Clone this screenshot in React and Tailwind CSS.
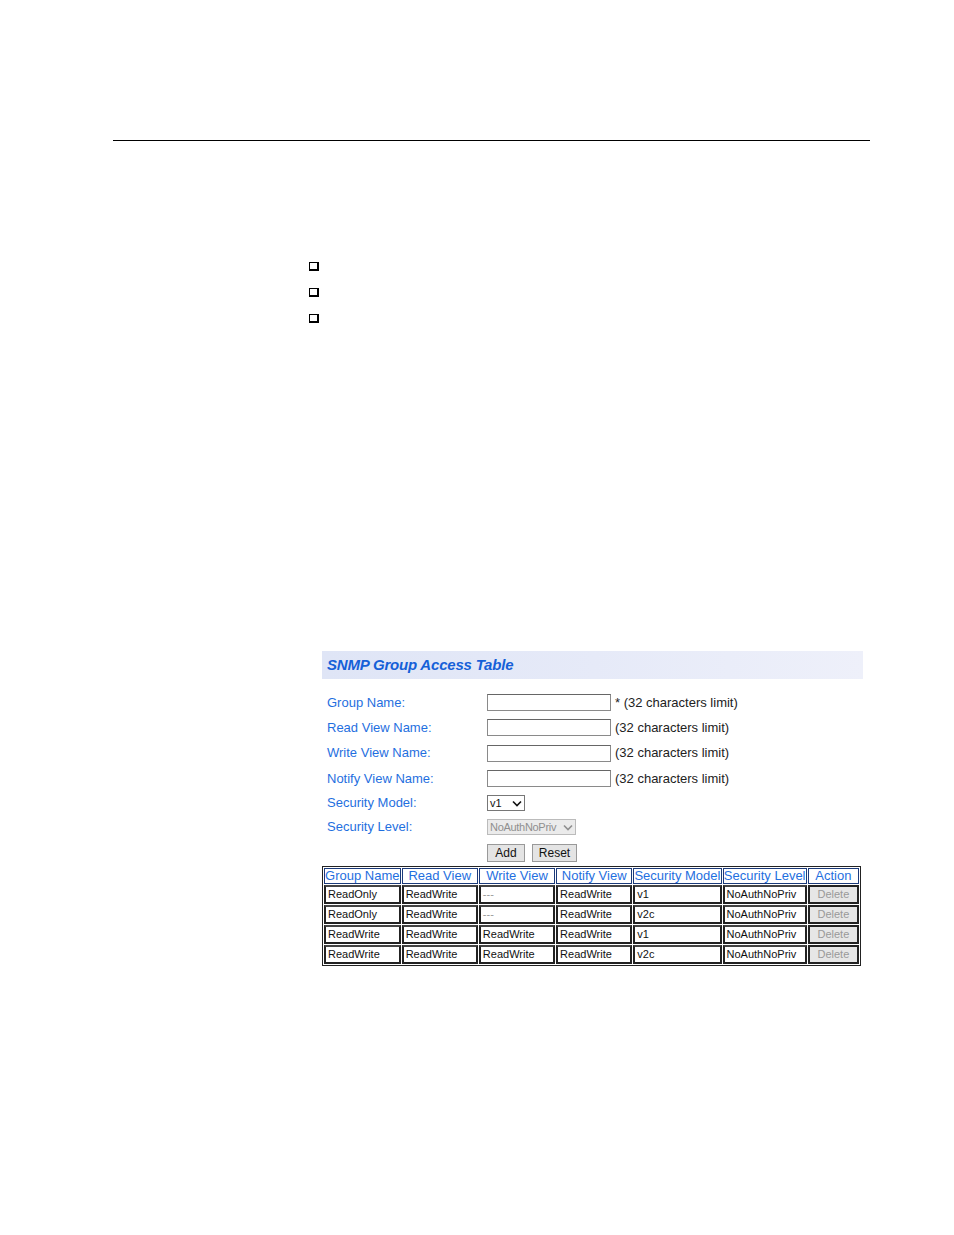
import React from "react";

const fields = [
  { label: "Group Name:", hint: "* (32 characters limit)" },
  { label: "Read View Name:", hint: "(32 characters limit)" },
  { label: "Write View Name:", hint: "(32 characters limit)" },
  { label: "Notify View Name:", hint: "(32 characters limit)" },
];

const rows = [
  ["ReadOnly", "ReadWrite", "---", "ReadWrite", "v1", "NoAuthNoPriv"],
  ["ReadOnly", "ReadWrite", "---", "ReadWrite", "v2c", "NoAuthNoPriv"],
  ["ReadWrite", "ReadWrite", "ReadWrite", "ReadWrite", "v1", "NoAuthNoPriv"],
  ["ReadWrite", "ReadWrite", "ReadWrite", "ReadWrite", "v2c", "NoAuthNoPriv"],
];

const headers = [
  ["Group Name", "w-[76px]"],
  ["Read View", "w-[76px]"],
  ["Write View", "w-[76px]"],
  ["Notify View", "w-[76px]"],
  ["Security Model", "w-[86px]"],
  ["Security Level", "w-[84px]"],
  ["Action", "w-[51px]"],
];

function Box() {
  return (
    <div className="w-[10px] h-[9px] border border-black border-r-[2px] border-b-[2px] bg-white" />
  );
}

function Chevron() {
  return (
    <svg width="10" height="7" viewBox="0 0 10 7" className="shrink-0">
      <path d="M1 1.5 L5 5.5 L9 1.5" fill="none" stroke="currentColor" strokeWidth="1.6" />
    </svg>
  );
}

export default function App() {
  return (
    <div className="relative w-[954px] h-[1235px] bg-white" style={{ fontFamily: '"Liberation Sans", Arial, sans-serif' }}>
      <div className="pt-[140px] pl-[113px]">
        <div className="w-[757px] h-px bg-black" />
      </div>

      <div className="pl-[309px] pt-[121px] flex flex-col gap-[17px]">
        <Box />
        <Box />
        <Box />
      </div>

      <div className="ml-[322px] mt-[328px] w-[541px]">
        <div className="h-[28px] flex items-center pl-[5px] bg-gradient-to-r from-[#dfe5f6] via-[#e6eaf8] to-[#eef0fa]">
          <span className="text-[15px] font-bold italic text-[#1560d8] tracking-[-0.2px]">SNMP Group Access Table</span>
        </div>

        <div className="mt-[11px]">
          {fields.map((f) => (
            <div key={f.label} className="h-[25.3px] flex items-center">
              <div className="w-[165px] pl-[5px] text-[13px] text-[#1f6fe0]">{f.label}</div>
              <div className="w-[124px] h-[17px] border border-[#8a8a8a] border-t-[#666] bg-white" />
              <div className="pl-[4px] text-[13px] text-[#222]">{f.hint}</div>
            </div>
          ))}
          <div className="h-[24px] flex items-center">
            <div className="w-[165px] pl-[5px] text-[13px] text-[#1f6fe0]">Security Model:</div>
            <div className="w-[38px] h-[16px] border border-[#777] flex items-center justify-between px-[2px] text-[11px] text-[#111]">
              <span>v1</span>
              <Chevron />
            </div>
          </div>
          <div className="h-[24px] flex items-center">
            <div className="w-[165px] pl-[5px] text-[13px] text-[#1f6fe0]">Security Level:</div>
            <div className="w-[89px] h-[16px] border border-[#bbb] bg-[#ebebeb] flex items-center justify-between px-[2px] text-[11px] text-[#8f8f8f] tracking-[-0.3px]">
              <span>NoAuthNoPriv</span>
              <Chevron />
            </div>
          </div>
          <div className="h-[27px] flex items-center pl-[165px] gap-[7px]">
            <div className="w-[38px] h-[18px] border border-[#999] bg-[#e4e4e4] flex items-center justify-center text-[12px] text-[#111]">Add</div>
            <div className="w-[45px] h-[18px] border border-[#999] bg-[#e4e4e4] flex items-center justify-center text-[12px] text-[#111]">Reset</div>
          </div>
        </div>

        <table className="border-separate border-spacing-[1px] border border-[#222] w-[539px]">
          <thead>
            <tr>
              {headers.map(([h, w]) => (
                <th key={h} className={`${w} h-[16px] border border-[#1b3a7a] font-normal text-[13px] leading-[14px] text-[#1f6fe0] text-center whitespace-nowrap overflow-hidden p-0`}>
                  {h}
                </th>
              ))}
            </tr>
          </thead>
          <tbody>
            {rows.map((r, i) => (
              <tr key={i}>
                {r.map((c, j) => (
                  <td key={j} className={`h-[19px] border-2 border-[#222] border-t-[#444] text-[11px] leading-[13px] pl-[2px] whitespace-nowrap p-0 ${c === "---" ? "text-[#999]" : "text-[#111]"}`}>
                    {c}
                  </td>
                ))}
                <td className="h-[19px] border-2 border-[#222] bg-[#e6e6e6] text-[11px] leading-[13px] text-[#999] text-center p-0">Delete</td>
              </tr>
            ))}
          </tbody>
        </table>
      </div>
    </div>
  );
}
